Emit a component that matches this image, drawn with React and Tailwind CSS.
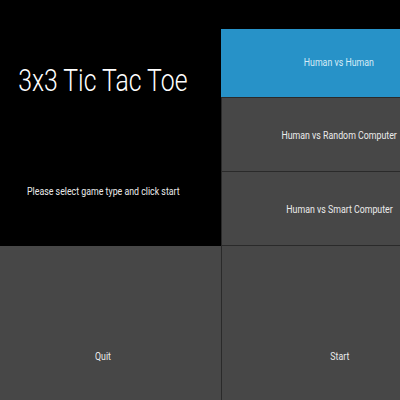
import React, { useState } from 'react';

const modes = ['Human vs Human', 'Human vs Random Computer', 'Human vs Smart Computer'];

// the source window is squeezed sideways, so text is narrowed with scale-x
export default function App() {
  const [mode, setMode] = useState(0);

  return (
    <div className="w-[400px] h-[400px] overflow-hidden bg-black text-white font-['Roboto',sans-serif]">
      <div className="flex h-[246px] w-[457px]">
        <div className="w-[221px] shrink-0 flex flex-col">
          <div className="h-[160px] w-[206px] flex items-center justify-center">
            <h1 className="text-[31px] font-light leading-none whitespace-nowrap scale-x-[0.8]">3x3 Tic Tac Toe</h1>
          </div>
          <div className="h-[64px] w-[206px] flex items-center justify-center">
            <p className="text-[11px] text-[#ececec] whitespace-nowrap scale-x-[0.8]">Please select game type and click start</p>
          </div>
        </div>
        <div className="w-[236px] shrink-0 flex flex-col pt-[29px]">
          {modes.map((m, i) => (
            <button
              key={m}
              onClick={() => setMode(i)}
              className={
                (i === 0 ? 'h-[69px] ' : 'h-[74px] pt-[4px] border-l ') +
                'flex items-center justify-center border-b border-[#2a2a2a] ' +
                (mode === i ? 'bg-[#2792c8] text-[#d6ecf7]' : 'bg-[#474747] text-[#ececec]')
              }
            >
              <span className="text-[11px] whitespace-nowrap scale-x-[0.8]">{m}</span>
            </button>
          ))}
        </div>
      </div>
      <div className="flex h-[222px] w-[457px]">
        <button className="w-[221px] shrink-0 bg-[#474747] flex items-center text-[#ececec]">
          <span className="w-[206px] text-[11px] scale-x-[0.8]">Quit</span>
        </button>
        <button className="w-[236px] shrink-0 bg-[#474747] border-l border-[#2a2a2a] flex items-center justify-center text-[#ececec]">
          <span className="text-[11px] scale-x-[0.8]">Start</span>
        </button>
      </div>
    </div>
  );
}
